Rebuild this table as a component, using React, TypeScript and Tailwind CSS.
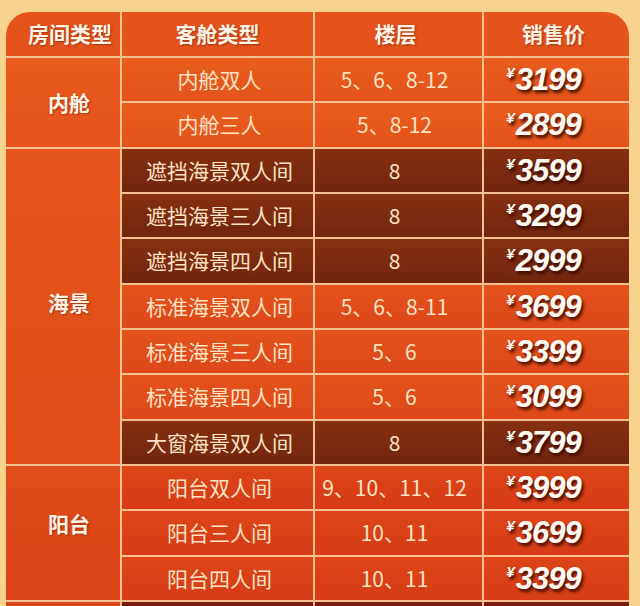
import React from "react";

type Tone = "orange" | "dark" | "std" | "red";

interface Cabin {
  name: string;
  floors: string;
  price: string;
  tone: Tone;
}

interface Group {
  name: string;
  span: string;
  labelPad: string;
  cell: string;
  cabins: Cabin[];
}

const toneBg: Record<Tone, string> = {
  orange: "bg-gradient-to-b from-[#e95d1e] to-[#e3521b]",
  dark: "bg-gradient-to-b from-[#86300f] to-[#72250d]",
  std: "bg-gradient-to-b from-[#e5521c] to-[#dd471a]",
  red: "bg-gradient-to-b from-[#dd4518] to-[#d63b16]",
};

const groups: Group[] = [
  {
    name: "内舱",
    span: "row-span-2",
    labelPad: "",
    cell: "bg-gradient-to-b from-[#e95a1e] to-[#e5531b]",
    cabins: [
      { name: "内舱双人", floors: "5、6、8-12", price: "3199", tone: "orange" },
      { name: "内舱三人", floors: "5、8-12", price: "2899", tone: "orange" },
    ],
  },
  {
    name: "海景",
    span: "row-span-7",
    labelPad: "pb-[8px]",
    cell: "bg-gradient-to-b from-[#e6551c] to-[#e14c1a]",
    cabins: [
      { name: "遮挡海景双人间", floors: "8", price: "3599", tone: "dark" },
      { name: "遮挡海景三人间", floors: "8", price: "3299", tone: "dark" },
      { name: "遮挡海景四人间", floors: "8", price: "2999", tone: "dark" },
      { name: "标准海景双人间", floors: "5、6、8-11", price: "3699", tone: "std" },
      { name: "标准海景三人间", floors: "5、6", price: "3399", tone: "std" },
      { name: "标准海景四人间", floors: "5、6", price: "3099", tone: "std" },
      { name: "大窗海景双人间", floors: "8", price: "3799", tone: "dark" },
    ],
  },
  {
    name: "阳台",
    span: "row-span-3",
    labelPad: "pb-[18px]",
    cell: "bg-gradient-to-b from-[#e04c1a] to-[#da4317]",
    cabins: [
      { name: "阳台双人间", floors: "9、10、11、12", price: "3999", tone: "red" },
      { name: "阳台三人间", floors: "10、11", price: "3699", tone: "red" },
      { name: "阳台四人间", floors: "10、11", price: "3399", tone: "red" },
    ],
  },
];

const cjk = "font-['Noto_Sans_CJK_SC','Noto_Sans',sans-serif]";

const Price: React.FC<{ value: string }> = ({ value }) => (
  <div className="flex items-start pr-[26px] font-['Liberation_Sans',Arial,sans-serif] font-bold italic text-[#fffaf2] [text-shadow:2px_3px_3px_rgba(60,10,0,0.9)]">
    <span className="mt-[1px] mr-[1px] text-[15px] leading-none">¥</span>
    <span className="text-[31px] leading-none tracking-[-1px]">{value}</span>
  </div>
);

const App: React.FC = () => {
  return (
    <div className="min-h-screen bg-[#f8d38d] pt-3 pl-[6px] pr-[11px]">
      <div className={`grid grid-cols-[114px_191px_167px_145px] grid-rows-[44px] auto-rows-[43.33px] gap-[2px] overflow-hidden rounded-t-[24px] bg-[#f4c08f] ${cjk}`}>
        {/* 表头 */}
        {["房间类型", "客舱类型", "楼层", "销售价"].map((h, i) => (
          <div
            key={h}
            className={`flex items-center justify-center bg-[#e5521b] text-[21px] font-bold text-[#fff4e6] [text-shadow:1px_1px_2px_rgba(90,20,0,0.5)] ${i === 0 ? "pl-[14px]" : ""} ${i === 2 ? "pr-[6px]" : ""} ${i === 3 ? "pr-[6px]" : ""}`}
          >
            {h}
          </div>
        ))}

        {groups.map((g) => (
          <React.Fragment key={g.name}>
            <div
              className={`${g.span} ${g.cell} ${g.labelPad} flex items-center justify-center pl-[12px] text-[21px] font-bold text-[#fff4e6] [text-shadow:1px_1px_2px_rgba(90,20,0,0.5)]`}
            >
              {g.name}
            </div>
            {g.cabins.map((c) => (
              <React.Fragment key={c.name}>
                <div className={`${toneBg[c.tone]} flex items-center justify-center pl-[4px] text-[21px] text-[#fce3c5]`}>
                  {c.name}
                </div>
                <div className={`${toneBg[c.tone]} flex items-center justify-center pr-[8px] text-[21px] text-[#fce3c5]`}>
                  {c.floors}
                </div>
                <div className={`${toneBg[c.tone]} flex items-center justify-center`}>
                  <Price value={c.price} />
                </div>
              </React.Fragment>
            ))}
          </React.Fragment>
        ))}

        {/* 下一组（被截断） */}
        <div className="bg-[#dc4318]" />
        <div className="bg-[#7a1d0e]" />
        <div className="bg-[#7a1d0e]" />
        <div className="bg-[#7a1d0e]" />
      </div>
    </div>
  );
};

export default App;
